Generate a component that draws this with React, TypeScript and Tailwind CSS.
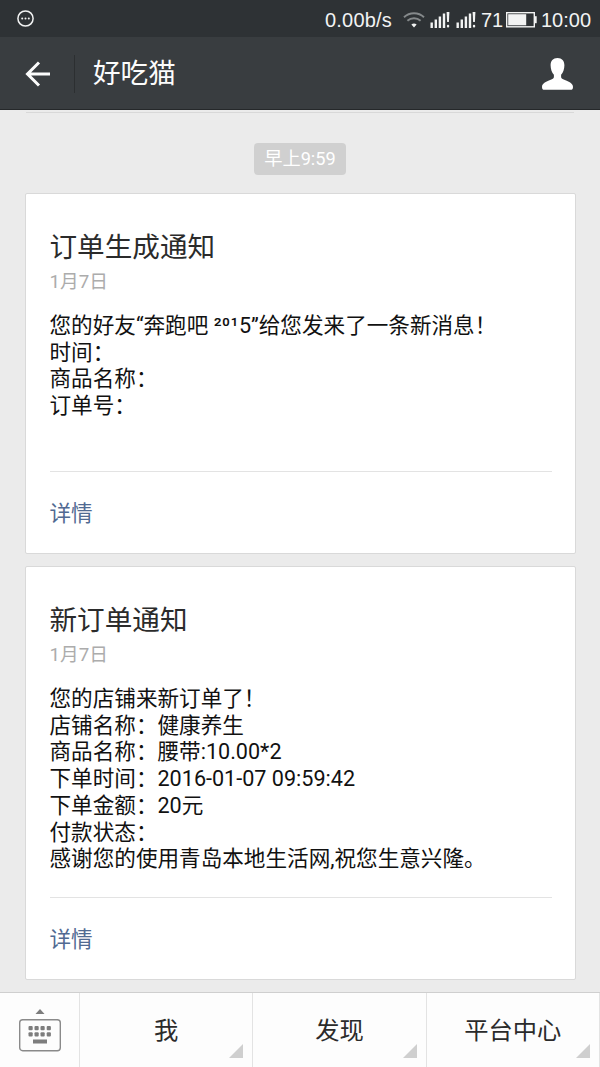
import type { ReactNode } from "react";

type NoticeCardProps = {
  title: string;
  date: string;
  lines: ReactNode[];
  className?: string;
  bodyClassName: string;
};

const ORDER_CREATED = [
  <>
    您的好友“奔跑吧 <span className="tracking-[0.5px]">²⁰¹</span>5”给您发来了一条新消息！
  </>,
  "时间：",
  "商品名称：",
  "订单号：",
];

const NEW_ORDER = [
  "您的店铺来新订单了！",
  "店铺名称：健康养生",
  "商品名称：腰带:10.00*2",
  "下单时间：2016-01-07 09:59:42",
  "下单金额：20元",
  "付款状态：",
  "感谢您的使用青岛本地生活网,祝您生意兴隆。",
];

const MENU = ["我", "发现", "平台中心"];

function SignalIcon() {
  return (
    <svg width="20" height="18" viewBox="0 0 20 18" fill="#f2f3f3">
      <rect x="0.5" y="11.5" width="2.4" height="5.5" />
      <rect x="4.6" y="8.5" width="2.4" height="8.5" />
      <rect x="8.7" y="5.5" width="2.4" height="11.5" />
      <rect x="12.8" y="2.5" width="2.4" height="14.5" />
      <path d="M16.6 1h2.8l-.5 10h-1.8z" />
      <rect x="16.9" y="13.8" width="2.3" height="2.7" rx="1" />
    </svg>
  );
}

function StatusBar() {
  return (
    <div className="flex h-[37px] items-center bg-[#2e3235] pt-[2px] pr-[9px] pl-[17px] font-['Liberation_Sans',sans-serif] text-[20px] text-[#f2f3f3]">
      <svg width="17" height="17" viewBox="0 0 17 17" className="-mt-[2px]">
        <circle cx="8.5" cy="8.5" r="7.6" fill="none" stroke="#f2f3f3" strokeWidth="1.5" />
        <circle cx="5.2" cy="8.4" r="1" fill="#f2f3f3" />
        <circle cx="8.5" cy="8.4" r="1" fill="#f2f3f3" />
        <circle cx="11.8" cy="8.4" r="1" fill="#f2f3f3" />
      </svg>
      <span className="ml-auto tracking-[0.2px]">0.00b/s</span>
      <svg width="22" height="18" viewBox="0 0 22 18" className="ml-[11px]" fill="none" strokeWidth="1.9">
        <path d="M1 6.2a14.5 14.5 0 0 1 20 0" stroke="#85898b" />
        <path d="M4.4 9.8a9.8 9.8 0 0 1 13.2 0" stroke="#85898b" />
        <path d="M8.4 13.6a4 4 0 0 1 5.2 0L11 16.4z" fill="#f2f3f3" />
      </svg>
      <div className="ml-[5px] flex gap-[6px]">
        <SignalIcon />
        <SignalIcon />
      </div>
      <span className="ml-[5px] w-[22px]">71</span>
      <svg width="31" height="16" viewBox="0 0 31 16" className="ml-[3px]">
        <rect x="0.7" y="0.7" width="27.6" height="14.1" fill="none" stroke="#f2f3f3" strokeWidth="1.4" />
        <rect x="2.2" y="2.2" width="18" height="11.1" fill="#f2f3f3" />
        <rect x="28.8" y="4.2" width="1.9" height="7" fill="#f2f3f3" />
      </svg>
      <span className="ml-[4px] w-[50px]">10:00</span>
    </div>
  );
}

function Header() {
  return (
    <header className="flex h-[73px] items-center border-b border-[#25282a] bg-[#393d40] pt-[2px] pr-[27px] pl-[25px]">
      <svg width="26" height="26" viewBox="0 0 26 26" fill="none" stroke="#fcfcfc" strokeWidth="3">
        <path d="M14 1.5 2.5 13 14 24.5M2.5 13H25" />
      </svg>
      <div className="ml-[23px] h-[38px] w-px bg-[#2c2f31]" />
      <h1 className="ml-[18px] text-[27.6px] leading-[36px] text-[#fcfcfc]">好吃猫</h1>
      <svg width="31" height="32" viewBox="0 0 31 32" className="ml-auto" fill="#ffffff">
        <path d="M15.5 0C20 0 22.4 3 22.4 7.2c0 3.9-1.3 7.3-3.3 9.600v2.200c0 1.300 1.100 1.900 2.600 2.500 4.900 1.900 9.300 3.700 9.300 7.400 0 1.900-.8 2.900-2.500 2.900h-26C.8 31.800 0 30.800 0 28.900c0-3.700 4.400-5.500 9.300-7.400 1.500-.6 2.600-1.200 2.600-2.500v-2.200C9.900 14.500 8.600 11.100 8.600 7.200 8.600 3 11 0 15.500 0z" />
      </svg>
    </header>
  );
}

function NoticeCard({ title, date, lines, className = "", bodyClassName }: NoticeCardProps) {
  return (
    <section className={`rounded-[2px] border border-[#d9d9d9] bg-white px-[23.5px] ${className}`}>
      <h2 className="pt-[34px] text-[27.6px] leading-[40px] text-[#2b2b2b]">{title}</h2>
      <div className="text-[18.7px] leading-[28px] text-[#acacac]">{date}</div>
      <div className={`border-b border-[#e3e3e3] pt-[17px] text-[21.6px] leading-[26.7px] whitespace-nowrap text-[#111111] ${bodyClassName}`}>
        {lines.map((line, i) => (
          <p key={i}>{line}</p>
        ))}
      </div>
      <a className="block pt-[25px] text-[21.6px] leading-[33px] text-[#516a92]">详情</a>
    </section>
  );
}

function BottomMenu() {
  return (
    <nav className="flex h-[75px] border-t border-[#cfcfcf] bg-[#fdfdfd]">
      <div className="flex w-[79px] shrink-0 justify-center pt-[15px]">
        <svg width="42" height="44" viewBox="0 0 42 44" fill="#7d7d7d">
          <path d="M21 1l4.5 5h-9z" />
          <rect x="0.7" y="11.7" width="40.6" height="31" rx="3" fill="none" stroke="#8a8a8a" strokeWidth="1.4" />
          {[9.5, 15.5, 21.5, 27.7].map((x) => (
            <g key={x}>
              <rect x={x} y="18" width="4.2" height="4.2" rx="1" />
              <rect x={x} y="24.2" width="4.2" height="4.2" rx="1" />
            </g>
          ))}
          <rect x="14" y="31.5" width="14" height="4" />
        </svg>
      </div>
      {MENU.map((item) => (
        <div
          key={item}
          className="relative flex flex-1 items-center justify-center border-l border-[#e3e3e3] pt-[2px] text-[24.3px] text-[#2b2b2b] last:border-r"
        >
          {item}
          <svg width="14" height="14" viewBox="0 0 14 14" className="absolute right-[9px] bottom-[9px]">
            <path d="M14 0v14H0z" fill="#cfcfcf" />
          </svg>
        </div>
      ))}
    </nav>
  );
}

export default function App() {
  return (
    <div
      lang="zh-CN"
      className="flex h-[1067px] w-[600px] flex-col overflow-hidden bg-[#ebebeb] font-[Roboto,'Noto_Sans_CJK_SC',sans-serif]"
    >
      <StatusBar />
      <Header />
      <main className="flex-1 px-[25px]">
        <div className="mx-px h-[3px] border-b border-[#d8d8d8]" />
        <div className="mt-[30px] flex justify-center">
          <span className="flex h-[32px] w-[92px] items-center justify-center rounded-[4px] bg-[#d0d0d0] text-[18.2px] whitespace-nowrap text-white">
            早上9:59
          </span>
        </div>
        <NoticeCard
          title="订单生成通知"
          date="1月7日"
          lines={ORDER_CREATED}
          className="mt-[18px] h-[361px] w-[551px]"
          bodyClassName="h-[176px]"
        />
        <NoticeCard
          title="新订单通知"
          date="1月7日"
          lines={NEW_ORDER}
          className="mt-[12px] h-[414px] w-[551px]"
          bodyClassName="h-[229px]"
        />
      </main>
      <BottomMenu />
    </div>
  );
}
